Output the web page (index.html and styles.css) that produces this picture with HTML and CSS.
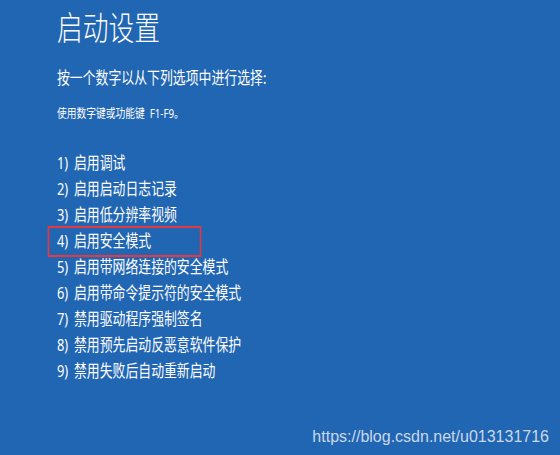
FILE: index.html
```html
<!DOCTYPE html>
<html lang="zh-CN">
<head>
<meta charset="utf-8">
<title>启动设置</title>
<link rel="stylesheet" href="styles.css">
</head>
<body>
<main class="screen">
  <div class="content">
    <h1 class="title">启动设置</h1>
    <p class="prompt">按一个数字以从下列选项中进行选择:</p>
    <p class="hint">使用数字键或功能键 F1-F9。</p>
    <ol class="options">
      <li>1) 启用调试</li>
      <li>2) 启用启动日志记录</li>
      <li>3) 启用低分辨率视频</li>
      <li class="marked">4) 启用安全模式<span class="mark-box"></span></li>
      <li>5) 启用带网络连接的安全模式</li>
      <li>6) 启用带命令提示符的安全模式</li>
      <li>7) 禁用驱动程序强制签名</li>
      <li>8) 禁用预先启动反恶意软件保护</li>
      <li>9) 禁用失败后自动重新启动</li>
    </ol>
  </div>
  <div class="watermark">https://blog.csdn.net/u013131716</div>
</main>
</body>
</html>
```

FILE: styles.css
```css
html, body {
  margin: 0;
  padding: 0;
  background: #2166b2;
}

.screen {
  width: 560px;
  height: 455px;
  box-sizing: border-box;
  display: flex;
  flex-direction: column;
  padding: 8px 11px 8px 57px;
  color: #ffffff;
  font-family: "Noto Sans", "Noto Sans CJK SC", sans-serif;
  overflow: hidden;
}

.content {
  transform: scaleX(0.78);
  transform-origin: 0 0;
  width: 600px;
}

.title {
  margin: 0;
  font-size: 33px;
  line-height: 40px;
  font-weight: 300;
}

.prompt {
  margin: 18px 0 0;
  font-size: 16.5px;
  line-height: 24px;
  font-weight: 400;
}

.hint {
  margin: 15px 0 0;
  font-size: 12.5px;
  line-height: 18px;
  font-weight: 400;
  word-spacing: 3px;
}

.options {
  list-style: none;
  margin: 27px 0 0;
  padding: 0;
  font-size: 16.5px;
  line-height: 26px;
  font-weight: 400;
  word-spacing: 3px;
}

.options li {
  position: relative;
}

.mark-box {
  position: absolute;
  left: -12px;
  top: -2px;
  width: 197px;
  height: 31px;
  box-sizing: border-box;
  border-style: solid;
  border-color: #e8383d;
  border-width: 2px 2.6px;
}

.watermark {
  margin-top: auto;
  align-self: flex-end;
  font-family: "Liberation Sans", Arial, sans-serif;
  font-size: 16px;
  line-height: 20px;
  color: #c9d8ea;
  margin-bottom: 0;
}
```
